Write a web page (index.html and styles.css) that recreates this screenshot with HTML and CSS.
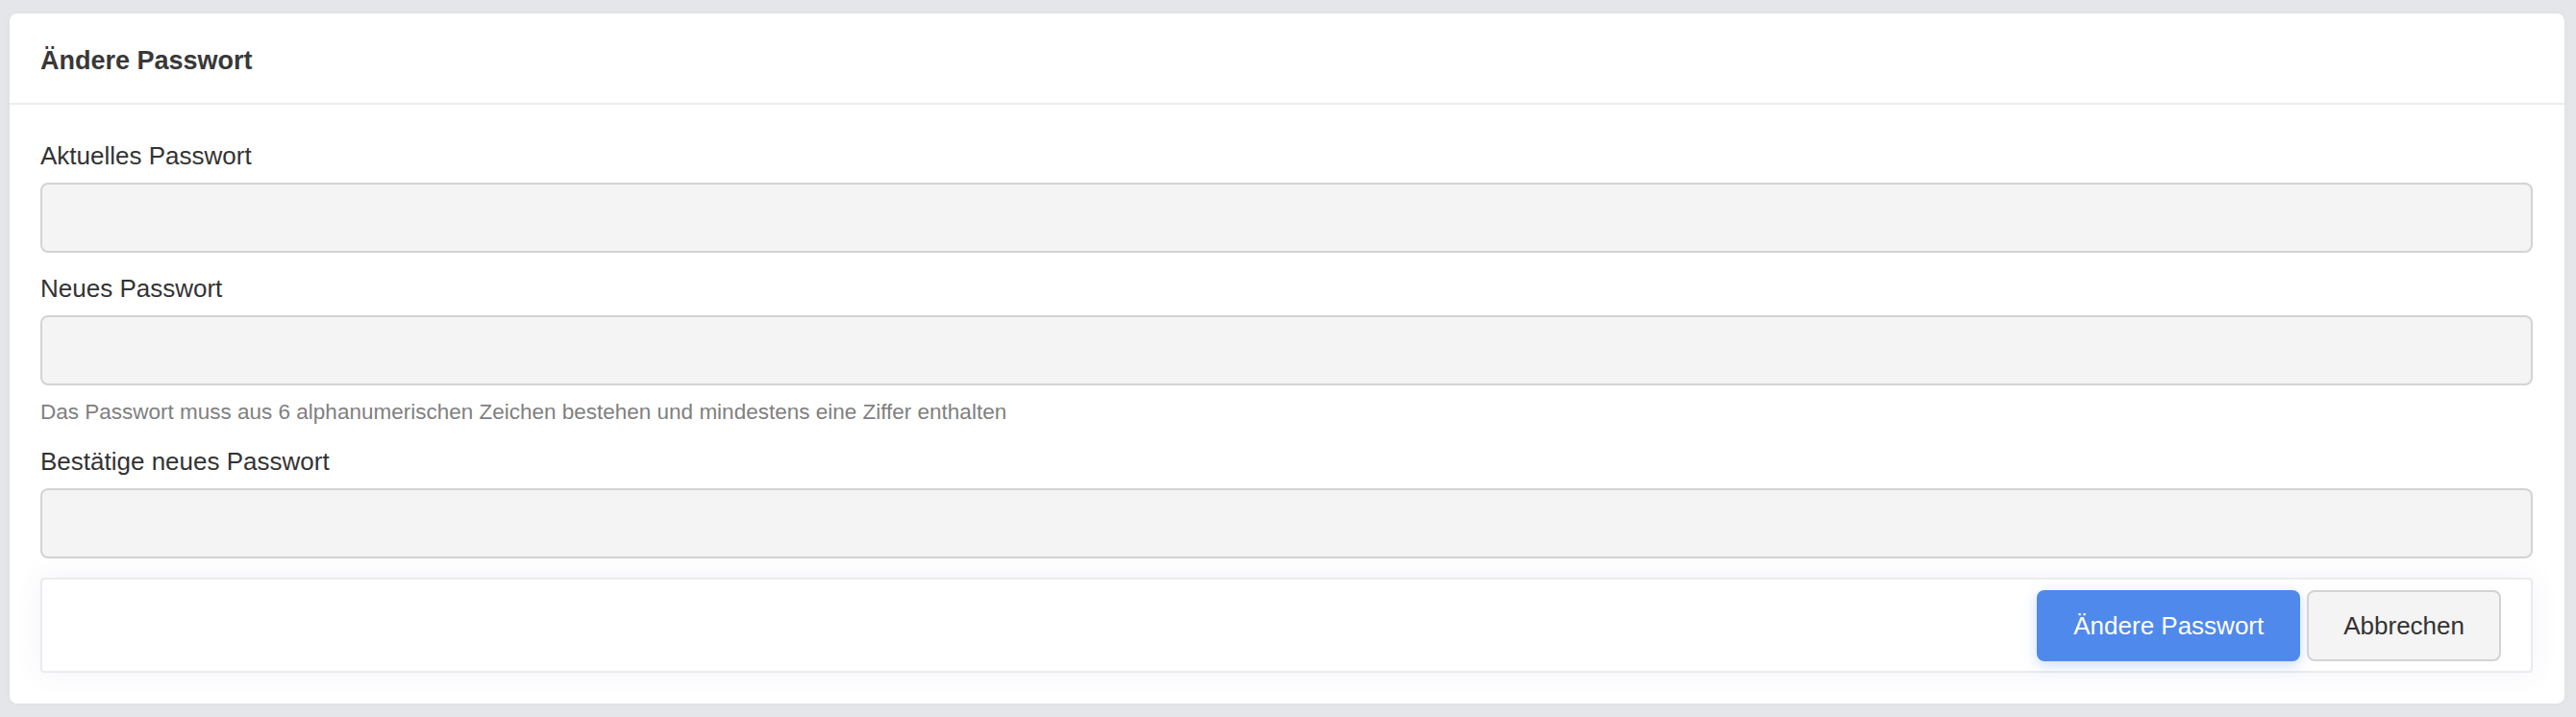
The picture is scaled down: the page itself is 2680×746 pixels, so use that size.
FILE: index.html
```html
<!DOCTYPE html>
<html lang="de">
<head>
<meta charset="utf-8">
<title>Ändere Passwort</title>
<link rel="stylesheet" href="styles.css">
</head>
<body>
<div class="card">
  <div class="card-header">
    <h2 class="card-title">Ändere Passwort</h2>
  </div>
  <form class="card-body">
    <div class="form-group">
      <label class="label" for="cur">Aktuelles Passwort</label>
      <input class="input" id="cur" type="password">
    </div>
    <div class="form-group form-group-help">
      <label class="label" for="new">Neues Passwort</label>
      <input class="input" id="new" type="password">
      <p class="help">Das Passwort muss aus 6 alphanumerischen Zeichen bestehen und mindestens eine Ziffer enthalten</p>
    </div>
    <div class="form-group form-group-last">
      <label class="label" for="conf">Bestätige neues Passwort</label>
      <input class="input" id="conf" type="password">
    </div>
    <div class="footer">
      <button type="submit" class="btn btn-primary">Ändere Passwort</button>
      <button type="button" class="btn btn-default">Abbrechen</button>
    </div>
  </form>
</div>
</body>
</html>
```
FILE: styles.css
```css
html, body {
  margin: 0;
  padding: 0;
}
body {
  background: #e5e6e9;
  font-family: "Liberation Sans", Arial, Helvetica, sans-serif;
  color: #333333;
  padding: 14px 12px 13px 10px;
}
.card {
  background: #ffffff;
  border-radius: 8px;
  box-shadow: 0 0 6px rgba(0, 0, 0, 0.04);
}
.card-header {
  padding: 29px 32px 24px;
  border-bottom: 2px solid #ececec;
}
.card-title {
  margin: 0;
  font-size: 27px;
  line-height: 40px;
  font-weight: bold;
  color: #383838;
}
.card-body {
  display: flex;
  flex-direction: column;
  padding: 35px 33px 32px 32px;
}
.form-group {
  display: flex;
  flex-direction: column;
  margin-bottom: 19px;
}
.form-group-help {
  margin-bottom: 16px;
}
.form-group-last {
  margin-bottom: 20px;
}
.label {
  font-size: 26px;
  line-height: 37px;
  margin-bottom: 9px;
  color: #333333;
}
.input {
  box-sizing: border-box;
  height: 73px;
  width: 100%;
  border: 2px solid #d3d3d3;
  border-radius: 8px;
  background: #f4f4f4;
  margin: 0;
  padding: 0 20px;
  font-size: 26px;
  font-family: inherit;
  outline: none;
}
.help {
  margin: 11px 0 0;
  font-size: 22.5px;
  line-height: 34px;
  color: #7f7f7f;
}
.footer {
  display: flex;
  justify-content: flex-end;
  gap: 7px;
  border: 2px solid #ebebee;
  border-radius: 4px;
  padding: 11px 31px 10px;
  box-shadow: 0 0 30px rgba(70, 90, 170, 0.07);
}
.btn {
  box-sizing: border-box;
  height: 74px;
  padding: 0 36px;
  border: 2px solid transparent;
  border-radius: 8px;
  font-family: inherit;
  font-size: 26px;
  cursor: pointer;
}
.btn-primary {
  background: #4f89eb;
  border-color: #4f89eb;
  color: #ffffff;
  box-shadow: 0 4px 14px rgba(79, 137, 235, 0.3);
}
.btn-default {
  background: #f4f4f4;
  border-color: #d3d3d3;
  color: #333333;
}
```
